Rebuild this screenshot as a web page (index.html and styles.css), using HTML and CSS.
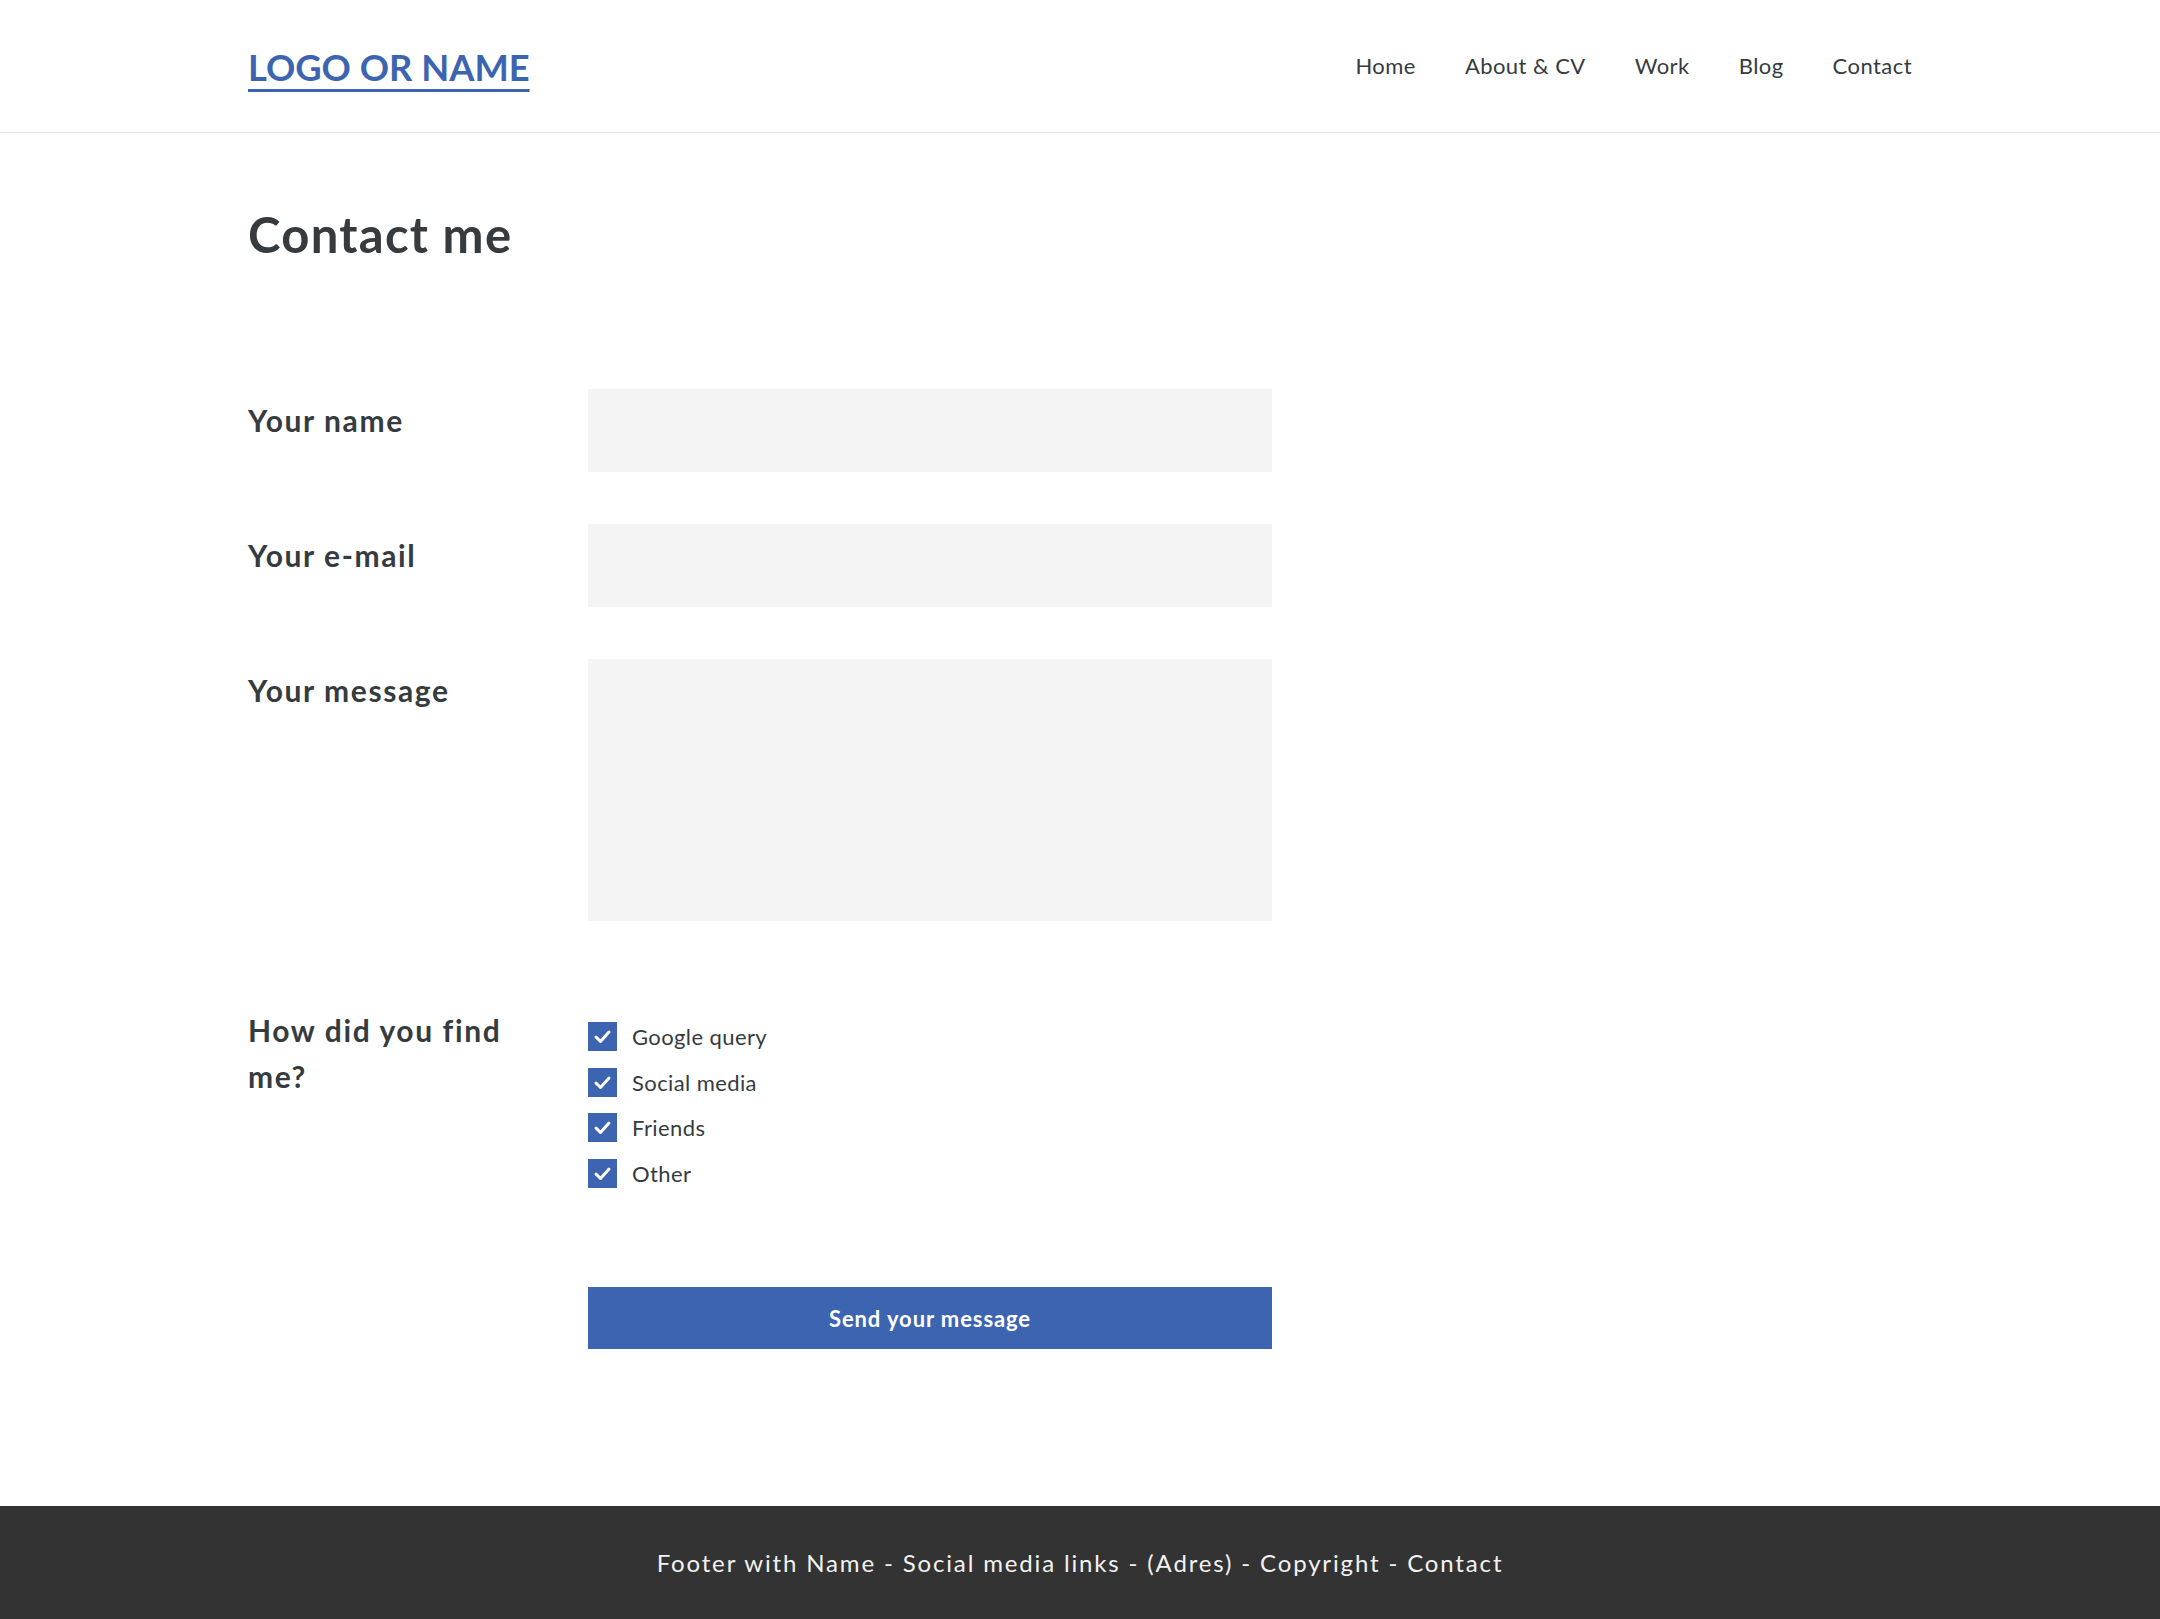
FILE: index.html
```html
<!DOCTYPE html>
<html lang="en">
<head>
<meta charset="utf-8">
<title>Contact me</title>
<link rel="stylesheet" href="styles.css">
</head>
<body>
<header class="site-header">
  <div class="container header-inner">
    <a class="logo" href="#">LOGO OR NAME</a>
    <nav class="nav">
      <a href="#">Home</a>
      <a href="#">About &amp; CV</a>
      <a href="#">Work</a>
      <a href="#">Blog</a>
      <a href="#">Contact</a>
    </nav>
  </div>
</header>
<main class="container main">
  <h1 class="title">Contact me</h1>
  <form class="form">
    <div class="row">
      <label class="label">Your name</label>
      <div class="field"></div>
    </div>
    <div class="row">
      <label class="label">Your e-mail</label>
      <div class="field"></div>
    </div>
    <div class="row">
      <label class="label">Your message</label>
      <div class="field field-area"></div>
    </div>
    <div class="row row-checks">
      <label class="label label-wrap">How did you find me?</label>
      <ul class="checks">
        <li class="check"><span class="box"><svg viewBox="0 0 29 29" width="29" height="29"><path d="M8 15 L12.5 19.5 L21 10" fill="none" stroke="#fff" stroke-width="3" stroke-linecap="round" stroke-linejoin="round"/></svg></span>Google query</li>
        <li class="check"><span class="box"><svg viewBox="0 0 29 29" width="29" height="29"><path d="M8 15 L12.5 19.5 L21 10" fill="none" stroke="#fff" stroke-width="3" stroke-linecap="round" stroke-linejoin="round"/></svg></span>Social media</li>
        <li class="check"><span class="box"><svg viewBox="0 0 29 29" width="29" height="29"><path d="M8 15 L12.5 19.5 L21 10" fill="none" stroke="#fff" stroke-width="3" stroke-linecap="round" stroke-linejoin="round"/></svg></span>Friends</li>
        <li class="check"><span class="box"><svg viewBox="0 0 29 29" width="29" height="29"><path d="M8 15 L12.5 19.5 L21 10" fill="none" stroke="#fff" stroke-width="3" stroke-linecap="round" stroke-linejoin="round"/></svg></span>Other</li>
      </ul>
    </div>
    <div class="row row-button">
      <span></span>
      <button type="button" class="send">Send your message</button>
    </div>
  </form>
</main>
<footer class="footer">
  Footer with Name - Social media links - (Adres) - Copyright - Contact
</footer>
</body>
</html>
```
FILE: styles.css
```css
* { box-sizing: border-box; }
html, body { margin: 0; padding: 0; }
body {
  font-family: Lato, "Open Sans", sans-serif;
  color: #353b3e;
  background: #fff;
}
.container {
  width: 1664px;
  margin: 0 auto;
}
.site-header {
  border-bottom: 1px solid #e4e4e4;
}
.header-inner {
  height: 132px;
  display: flex;
  align-items: center;
  justify-content: space-between;
}
.logo {
  font-family: Lato, sans-serif;
  font-weight: 700;
  font-size: 36.3px;
  color: #3d64b0;
  text-decoration: underline;
  text-decoration-thickness: 3px;
  text-underline-offset: 8px;
  margin-top: 2px;
}
.nav {
  display: flex;
  gap: 49px;
  margin-top: -2px;
}
.nav a {
  color: #353b3e;
  text-decoration: none;
  font-size: 22px;
  letter-spacing: 0.45px;
}
.main {
  padding-top: 72px;
  padding-bottom: 157px;
}
.title {
  margin: 0 0 126px;
  font-size: 49px;
  line-height: 58px;
  font-weight: 700;
  color: #353b3e;
  letter-spacing: 1.3px;
}
.form {
  display: flex;
  flex-direction: column;
  gap: 52px;
}
.row {
  display: grid;
  grid-template-columns: 340px 684px;
  align-items: start;
}
.label {
  font-size: 30px;
  font-weight: 700;
  line-height: 46px;
  padding-top: 8px;
  letter-spacing: 1.6px;
}
.label-wrap {
  width: 290px;
  padding-top: 9px;
}
.field {
  height: 83px;
  background: #f4f4f4;
}
.field-area {
  height: 262px;
}
.row-checks {
  margin-top: 25px;
}
.checks {
  list-style: none;
  margin: 0;
  padding: 16px 0 0;
}
.check {
  display: flex;
  align-items: center;
  height: 45.5px;
  font-size: 22px;
  gap: 15px;
  letter-spacing: 0.4px;
}
.box {
  width: 29px;
  height: 29px;
  background: #3d64b0;
  display: flex;
}
.row-button {
  margin-top: 39px;
}
.send {
  height: 62px;
  border: 0;
  background: #3d64b0;
  color: #fff;
  font-family: Lato, sans-serif;
  font-weight: 700;
  font-size: 22px;
  letter-spacing: 0.9px;
  padding: 0;
}
.footer {
  height: 113px;
  background: #333333;
  color: #f2f2f2;
  display: flex;
  align-items: center;
  justify-content: center;
  font-size: 24px;
  letter-spacing: 1.85px;
}
```
